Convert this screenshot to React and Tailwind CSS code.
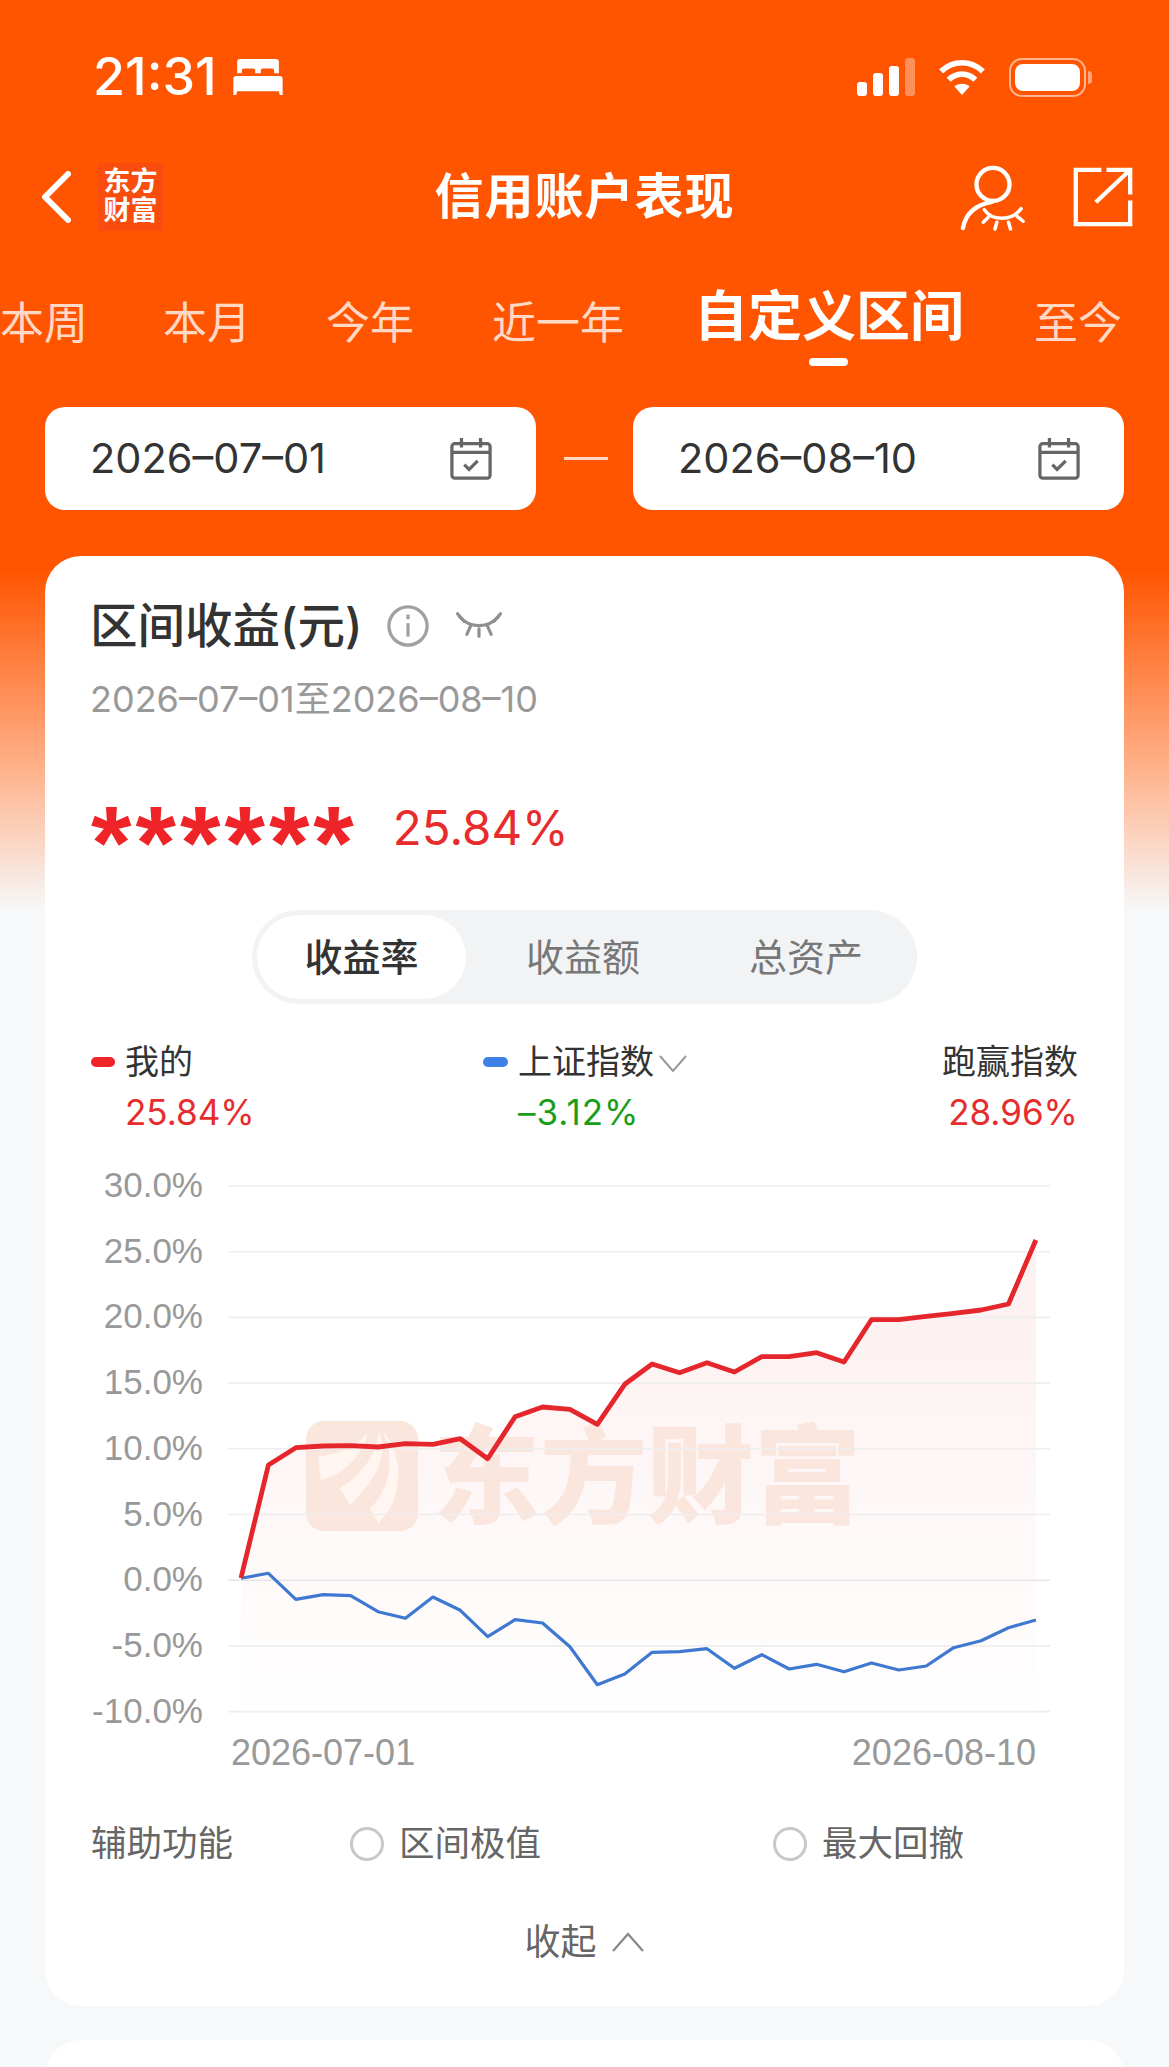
import React from "react"

const RED = [
  1578, 1465, 1447.7, 1446, 1445.7, 1447, 1443.7, 1444.3, 1438.7, 1458.7, 1416.7, 1407, 1409.3, 1424.3, 1384.3,
  1364, 1372.7, 1362.7, 1372, 1356.7, 1356.7, 1352.7, 1362, 1319.7, 1319.7, 1316.3, 1313.3, 1310, 1304, 1240,
]
const BLUE = [
  1578.3, 1573.3, 1599.3, 1594.7, 1595.7, 1611.7, 1618.3, 1597, 1610.3, 1636.7, 1619.7, 1623, 1646.7, 1684.7, 1674,
  1652.3, 1651.7, 1648.7, 1668.3, 1654.7, 1669, 1664.3, 1671.7, 1663, 1670, 1666, 1647.7, 1640.7, 1627.7, 1620,
]
const X0 = 241
const STEP = 27.41
const pts = (ys) => ys.map((y, i) => `${X0 + i * STEP},${y}`).join(" ")

const TICKS = ["30.0%", "25.0%", "20.0%", "15.0%", "10.0%", "5.0%", "0.0%", "-5.0%", "-10.0%"]
const AXIS_FONT = { fontFamily: "'Liberation Sans', sans-serif", fontSize: 35 }
const DATE_FONT = { fontFamily: "'Liberation Sans', sans-serif", fontSize: 36 }

function Calendar() {
  return (
    <svg width="42" height="42" viewBox="0 0 44 44" fill="none" stroke="#666" strokeWidth="3.4">
      <rect x="2" y="6" width="40" height="36" rx="3" />
      <path d="M2 15h40M12 0v10M32 0v10" />
      <path d="M15 28l5 5 9-9" />
    </svg>
  )
}

function DateBox({ value }) {
  return (
    <div className="w-[491px] h-[103px] bg-white rounded-[20px] flex items-center justify-between pl-[45px] pr-[44px]">
      <span className="text-[41.5px] text-[#333]">{value}</span>
      <Calendar />
    </div>
  )
}

function Radio({ label }) {
  return (
    <div className="flex items-center gap-[15px]">
      <span className="w-[34px] h-[34px] rounded-full border-[3px] border-[#c8c8c8]" />
      <span className="text-[35.5px] leading-[50px] text-[#666]">{label}</span>
    </div>
  )
}

function Chart() {
  return (
    <svg className="-mx-[46px] mt-[13px] block" width="1079" height="630" viewBox="45 1150 1079 630">
      <defs>
        <linearGradient id="redFill" x1="0" y1="0" x2="0" y2="1">
          <stop offset="0" stopColor="#e62c2c" stopOpacity="0.075" />
          <stop offset="0.65" stopColor="#e62c2c" stopOpacity="0.03" />
          <stop offset="1" stopColor="#e62c2c" stopOpacity="0.005" />
        </linearGradient>
      </defs>
      <polygon points={`${pts(RED)} 1036,1711 241,1711`} fill="url(#redFill)" />
      {/* watermark */}
      <rect x="306" y="1421" width="112" height="110" rx="18" fill="#fbe6de" />
      <g transform="translate(290 1400) scale(0.3333)" fill="#fff5f1">
        <path d="M85 170C140 165 200 140 232 100C225 150 170 225 92 240Z" />
        <path d="M150 265C210 225 260 170 265 95C295 150 270 230 180 315Z" />
        <path d="M240 325C290 280 320 190 280 95C345 170 340 300 265 370Z" />
      </g>
      <text x="433" y="1515" fill="#fbe6de" fontWeight="900" fontSize="107" fontFamily="'Noto Sans CJK SC', sans-serif">东方财富</text>
      {TICKS.map((t, i) => (
        <g key={t}>
          <line x1="228" x2="1050" y1={1186 + i * 65.7} y2={1186 + i * 65.7} stroke={t === "0.0%" ? "#e6e6e6" : "#eeeeee"} strokeWidth="1.6" />
          <text x="203" y={1197 + i * 65.7} textAnchor="end" fill="#999" style={AXIS_FONT}>{t}</text>
        </g>
      ))}
      <polyline points={pts(BLUE)} fill="none" stroke="#3f78d0" strokeWidth="3.2" strokeLinejoin="round" />
      <polyline points={pts(RED)} fill="none" stroke="#e5262c" strokeWidth="4.8" strokeLinejoin="round" />
      <text x="231" y="1765" fill="#999" style={DATE_FONT}>2026-07-01</text>
      <text x="1036" y="1765" textAnchor="end" fill="#999" style={DATE_FONT}>2026-08-10</text>
    </svg>
  )
}

export default function App() {
  return (
    <div className="font-['Inter','Noto_Sans_CJK_SC',sans-serif] w-[1169px] h-[2067px] overflow-hidden bg-[linear-gradient(#ff5500_0,#ff5500_570px,#ffb28c_770px,#f6f8f9_910px)]">
      {/* status bar */}
      <div className="h-[150px] pt-[4px] flex items-center justify-between pl-[93px] pr-[77px] text-white">
        <div className="flex items-center gap-[15px]">
          <span className="text-[52px] font-medium leading-none">21:31</span>
          <svg width="52" height="36" viewBox="0 0 52 38" fill="white">
            <path d="M7 0h38a3 3 0 0 1 3 3v12h-5v-3a2 2 0 0 0-2-2H31a2 2 0 0 0-2 2v3h-6v-3a2 2 0 0 0-2-2H11a2 2 0 0 0-2 2v3H4V3a3 3 0 0 1 3-3z" />
            <path d="M3 18h46a3 3 0 0 1 3 3v17h-3l-1-4H4l-1 4H0V21a3 3 0 0 1 3-3z" />
          </svg>
        </div>
        <div className="flex items-center gap-[22px]">
          <svg width="58" height="38" viewBox="0 0 58 38" fill="white">
            <rect x="0" y="24" width="10" height="14" rx="3" />
            <rect x="16" y="15" width="10" height="23" rx="3" />
            <rect x="32" y="8" width="10" height="30" rx="3" />
            <rect x="48" y="0" width="10" height="38" rx="3" fillOpacity="0.35" />
          </svg>
          <svg width="50" height="38" viewBox="0 0 50 40" fill="none" stroke="white" strokeWidth="6">
            <path d="M3 14c13-12 31-12 44 0M11 23c8-8 20-8 28 0" />
            <path d="M25 39l-8-9c4-4 12-4 16 0z" fill="white" stroke="none" />
          </svg>
          <div className="flex items-center gap-[2px]">
            <div className="w-[77px] h-[39px] rounded-[13px] border-[2px] border-[#ffb48e] p-[4px]">
              <div className="w-full h-full bg-white rounded-[8px]" />
            </div>
            <div className="w-[4px] h-[13px] rounded-r-full bg-[#ffa37a]" />
          </div>
        </div>
      </div>

      {/* title bar */}
      <div className="h-[94px] grid grid-cols-[1fr_auto_1fr] items-center">
        <div className="flex items-center pl-[42px] gap-[27px]">
          <svg width="29" height="52" viewBox="0 0 29 52" fill="none" stroke="white" strokeWidth="6" strokeLinecap="round" strokeLinejoin="round">
            <path d="M26 3L3 26l23 23" />
          </svg>
          <div className="w-[65px] h-[68px] bg-[#f84d0e] text-white text-[27px] leading-[29px] font-bold text-center pt-[4px]">东方<br />财富</div>
        </div>
        <span className="text-[49px] font-bold text-white tracking-[1px]">信用账户表现</span>
        <div className="flex items-center justify-end gap-[47px] pr-[36px]">
          <svg width="66" height="68" viewBox="0 0 68 68" fill="none" stroke="white" strokeWidth="4.5" strokeLinecap="round">
            <circle cx="34" cy="21" r="17" />
            <path d="M3 66C6 50 16 42 33 39" />
            <path d="M25 47c8 12 28 12 38-1M29 55l-5 5M38 60l-2 7M50 60l2 7M59 54l6 5" strokeWidth="3.6" />
          </svg>
          <svg width="60" height="60" viewBox="0 0 64 64" fill="none" stroke="white" strokeWidth="4.6" strokeLinecap="square">
            <path d="M28 3H3v58h58V38" />
            <path d="M26 36L60 4M38 3h23v24" />
          </svg>
        </div>
      </div>

      {/* period tabs */}
      <div className="pt-[38px] flex items-end gap-[75px] text-[#ffd9c6] text-[44px] leading-[58px] whitespace-nowrap">
        <span>本周</span>
        <span>本月</span>
        <span>今年</span>
        <span className="ml-[3px]">近一年</span>
        <span className="-ml-[5px] text-[54px] leading-[70px] font-bold text-white">自定义区间</span>
        <span className="-ml-[5px]">至今</span>
      </div>
      <div className="mt-[6px] ml-[809px] w-[39px] h-[8px] rounded-full bg-white" />

      {/* dates */}
      <div className="mt-[41px] pl-[45px] flex items-center">
        <DateBox value="2026–07–01" />
        <div className="w-[44px] h-[3px] bg-[#ffd9c6] ml-[28px] mr-[25px]" />
        <DateBox value="2026–08–10" />
      </div>

      {/* result card */}
      <div className="mt-[46px] mx-[45px] w-[1079px] bg-white rounded-[36px] pt-[40px] px-[46px] pb-[39px]">
        <div className="flex items-center h-[60px]">
          <span className="text-[47.5px] font-medium text-[#333] leading-none -ml-[1px]">区间收益(元)</span>
          <svg className="ml-[24px]" width="42" height="42" viewBox="0 0 44 44" fill="none" stroke="#a0a0a0" strokeWidth="3.4">
            <circle cx="22" cy="22" r="20" />
            <path d="M22 19v14M22 10v5" />
          </svg>
          <svg className="ml-[26px] -mt-[2px]" width="48" height="28" viewBox="0 0 50 30" fill="none" stroke="#8f8f8f" strokeWidth="3.4" strokeLinecap="round">
            <path d="M4 6c11 13 31 13 42 0" />
            <path d="M9 11L2 3M16 16l-4 9M34 16l4 9M41 11l7-8M25 19v8" />
          </svg>
        </div>
        <div className="mt-[23px] text-[36px] leading-10 text-[#999] -ml-[1px]">2026–07–01至2026–08–10</div>

        <div className="mt-[74px] flex items-center h-[70px]">
          <span className="font-['Liberation_Sans',sans-serif] text-[#ee2428] text-[104px] tracking-[4px] font-bold leading-[70px] h-[70px] pt-[15px]">******</span>
          <span className="ml-[35px] text-[47.5px] text-[#e62c2c]">25.84%</span>
        </div>

        <div className="mt-[47px] mx-auto w-[665px] h-[94px] rounded-[47px] bg-[#f2f3f5] p-[5px] flex items-center text-[38px]">
          <div className="w-[209px] h-[84px] rounded-[42px] bg-white flex items-center justify-center font-medium text-[#333]">收益率</div>
          <div className="w-[234px] text-center text-[#777]">收益额</div>
          <div className="w-[212px] text-center text-[#777]">总资产</div>
        </div>

        {/* legend */}
        <div className="mt-[33px] flex justify-between text-[34px] leading-[50px]">
          <div className="w-[392px]">
            <div className="flex items-center gap-[10px] text-[#333]">
              <span className="w-[24px] h-[10px] rounded-full bg-[#ee2428]" />
              <span>我的</span>
            </div>
            <div className="pl-[34px] text-[35px] text-[#e62c2c]">25.84%</div>
          </div>
          <div className="flex-1">
            <div className="flex items-center gap-[10px] text-[#333]">
              <span className="w-[25px] h-[10px] rounded-full bg-[#3e7fe8]" />
              <span>上证指数</span>
              <svg className="-ml-[6px] mt-[4px]" width="30" height="22" viewBox="0 0 30 22" fill="none" stroke="#999" strokeWidth="2">
                <path d="M2 3l13 15L28 3" />
              </svg>
            </div>
            <div className="pl-[35px] text-[35px] tracking-[1px] text-[#1a9e1a]">–3.12%</div>
          </div>
          <div className="text-right">
            <div className="text-[#333]">跑赢指数</div>
            <div className="text-[35px] text-[#e62c2c]">28.96%</div>
          </div>
        </div>

        <Chart />

        <div className="mt-[34px] flex items-center h-[60px]">
          <span className="text-[35.5px] text-[#666] w-[259px]">辅助功能</span>
          <div className="w-[423px]"><Radio label="区间极值" /></div>
          <Radio label="最大回撤" />
        </div>
        <div className="mt-[43px] h-[50px] flex items-center justify-center gap-[14px] text-[36px] text-[#666]">
          <span>收起</span>
          <svg width="34" height="22" viewBox="0 0 34 22" fill="none" stroke="#888" strokeWidth="2.2">
            <path d="M2 20L17 3l15 17" />
          </svg>
        </div>
      </div>

      <div className="mt-[34px] mx-[45px] w-[1079px] h-[60px] bg-white rounded-t-[36px]" />
    </div>
  )
}
